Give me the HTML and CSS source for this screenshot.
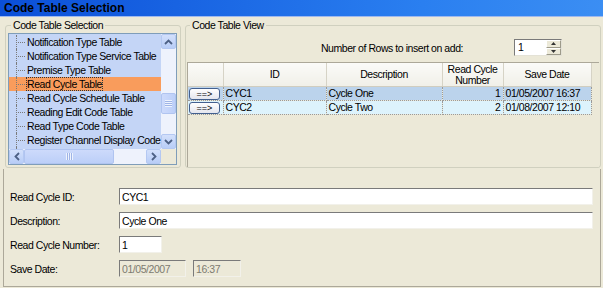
FILE: index.html
```html
<!DOCTYPE html>
<html lang="en">
<head>
  <meta charset="UTF-8" />
  <title>Code Table Selection</title>
  <link rel="stylesheet" href="styles.css">
</head>
<body>
  <div class="window">
    <div class="titlebar">Code Table Selection</div>

    <div class="top">
      <fieldset class="group group-select">
        <legend>Code Table Selection</legend>
        <div class="list">
          <div class="list-items">
            <div class="item"><span class="branch"></span><span class="label">Notification Type Table</span></div>
            <div class="item"><span class="branch"></span><span class="label">Notification Type Service Table</span></div>
            <div class="item"><span class="branch"></span><span class="label">Premise Type Table</span></div>
            <div class="item selected"><span class="branch"></span><span class="label">Read Cycle Table</span></div>
            <div class="item"><span class="branch"></span><span class="label">Read Cycle Schedule Table</span></div>
            <div class="item"><span class="branch"></span><span class="label">Reading Edit Code Table</span></div>
            <div class="item"><span class="branch"></span><span class="label">Read Type Code Table</span></div>
            <div class="item"><span class="branch"></span><span class="label">Register Channel Display Code Table</span></div>
            <div class="item"><span class="branch"></span><span class="label">Register Type Code Table</span></div>
          </div>
          <div class="vscroll">
            <div class="sb-btn"><svg width="9" height="6" viewBox="0 0 9 6"><path d="M1 5 L4.5 1.5 L8 5" fill="none" stroke="#4d6185" stroke-width="1.8"/></svg></div>
            <div class="sb-track"><div class="sb-thumb v"><span class="grip-v"></span></div></div>
            <div class="sb-btn"><svg width="9" height="6" viewBox="0 0 9 6"><path d="M1 1 L4.5 4.5 L8 1" fill="none" stroke="#4d6185" stroke-width="1.8"/></svg></div>
          </div>
          <div class="hscroll">
            <div class="sb-btn"><svg width="6" height="9" viewBox="0 0 6 9"><path d="M5 1 L1.5 4.5 L5 8" fill="none" stroke="#4d6185" stroke-width="1.8"/></svg></div>
            <div class="sb-track h"><div class="sb-thumb h"><span class="grip-h"></span></div></div>
            <div class="sb-btn"><svg width="6" height="9" viewBox="0 0 6 9"><path d="M1 1 L4.5 4.5 L1 8" fill="none" stroke="#4d6185" stroke-width="1.8"/></svg></div>
          </div>
          <div class="corner"></div>
        </div>
      </fieldset>

      <fieldset class="group group-view">
        <legend>Code Table View</legend>
        <div class="rows-add">
          <span>Number of Rows to insert on add:</span>
          <div class="spinner">
            <span class="spin-val">1</span>
            <div class="spin-btns">
              <span class="spin-btn"><svg width="5" height="3" viewBox="0 0 5 3"><path d="M0 3 L2.5 0 L5 3Z" fill="#333"/></svg></span>
              <span class="spin-btn"><svg width="5" height="3" viewBox="0 0 5 3"><path d="M0 0 L2.5 3 L5 0Z" fill="#333"/></svg></span>
            </div>
          </div>
        </div>
        <div class="grid-area">
          <table class="grid">
            <colgroup>
              <col class="c-btn"><col class="c-id"><col class="c-desc"><col class="c-num"><col class="c-date">
            </colgroup>
            <thead>
              <tr>
                <th></th>
                <th>ID</th>
                <th>Description</th>
                <th>Read Cycle<br>Number</th>
                <th>Save Date</th>
              </tr>
            </thead>
            <tbody>
              <tr class="row-current">
                <td class="btn-cell"><span class="row-btn">==&gt;</span></td>
                <td>CYC1</td>
                <td>Cycle One</td>
                <td class="num">1</td>
                <td>01/05/2007 16:37</td>
              </tr>
              <tr class="row-alt">
                <td class="btn-cell"><span class="row-btn">==&gt;</span></td>
                <td>CYC2</td>
                <td>Cycle Two</td>
                <td class="num">2</td>
                <td>01/08/2007 12:10</td>
              </tr>
            </tbody>
          </table>
        </div>
      </fieldset>
    </div>

    <div class="details">
      <div class="field">
        <label>Read Cycle ID:</label>
        <input class="box wide" type="text" value="CYC1">
      </div>
      <div class="field">
        <label>Description:</label>
        <input class="box wide" type="text" value="Cycle One">
      </div>
      <div class="field">
        <label>Read Cycle Number:</label>
        <input class="box short" type="text" value="1">
      </div>
      <div class="field">
        <label>Save Date:</label>
        <input class="box date" type="text" value="01/05/2007" disabled>
        <input class="box time" type="text" value="16:37" disabled>
      </div>
    </div>
  </div>
</body>
</html>
```

FILE: styles.css
```css
body {
  margin: 0;
  background: #ece9d8;
  font-family: "Liberation Sans", Arial, sans-serif;
  font-size: 10.5px;
  letter-spacing: -0.45px;
  color: #000;
}
.window {
  width: 603px;
  height: 288px;
  overflow: hidden;
}
.titlebar {
  height: 16px;
  line-height: 16px;
  padding-left: 4px;
  font-weight: bold;
  font-size: 12px;
  letter-spacing: 0;
  color: #000;
  background: linear-gradient(to right, #0b4fd8, #2a7ff0 70%, #3b8ef3);
  border-bottom: 1px solid #9fb9ee;
}
.top {
  display: flex;
  gap: 4px;
  padding: 1px 0 0 5px;
  height: 150px;
}
.group {
  box-sizing: border-box;
  margin: 0;
  min-width: 0;
  height: 150px;
  border: 1px solid #d0d0bf;
  border-radius: 3px;
}
.group legend {
  margin-left: 3px;
  padding: 0 2px;
  line-height: 14px;
}
.group-select {
  width: 176px;
  padding: 1px 2px 2px 2px;
}
.group-view {
  width: 416px;
  padding: 0 1px 0 1px;
}

/* tree list */
.list {
  box-sizing: border-box;
  width: 169px;
  height: 132px;
  border: 1px solid #7f9db9;
  background: #c4d5f6;
  display: grid;
  grid-template-columns: 1fr 15px;
  grid-template-rows: 1fr 15px;
}
.list-items {
  overflow: hidden;
  padding-top: 1px;
}
.item {
  display: flex;
  align-items: center;
  height: 14px;
  white-space: nowrap;
}
.item.selected {
  background: #f99c5c;
}
.branch {
  flex: none;
  width: 9px;
  height: 14px;
  margin-left: 7px;
  border-left: 1px dotted #7a7a7a;
  background: repeating-linear-gradient(to right, #7a7a7a 0 1px, transparent 1px 2px) no-repeat 1px 7px / 8px 1px;
}
.label {
  padding: 0;
  line-height: 12px;
  border: 1px dotted transparent;
}
.selected .label {
  border-color: #333;
}
.vscroll {
  display: flex;
  flex-direction: column;
  background: #eef2fc;
}
.hscroll {
  display: flex;
  background: #eef2fc;
}
.sb-btn {
  box-sizing: border-box;
  flex: none;
  width: 15px;
  height: 15px;
  display: flex;
  align-items: center;
  justify-content: center;
  background: linear-gradient(#d3e0fb, #b8cdf7);
  border: 1px solid #b4c8f2;
  border-radius: 2px;
}
.sb-track {
  flex: 1;
}
.sb-thumb {
  box-sizing: border-box;
  background: linear-gradient(to right, #cddafb, #bccff8);
  border: 1px solid #b0c4f0;
  border-radius: 2px;
  display: flex;
  align-items: center;
  justify-content: center;
}
.sb-thumb.v {
  margin-top: 44px;
  height: 21px;
}
.sb-thumb.h {
  width: 90px;
  height: 15px;
  background: linear-gradient(#cddafb, #bccff8);
}
.grip-v {
  width: 7px;
  height: 7px;
  background: repeating-linear-gradient(#eef3fd 0 1px, #9fb4e6 1px 2px);
}
.grip-h {
  width: 7px;
  height: 7px;
  background: repeating-linear-gradient(to right, #eef3fd 0 1px, #9fb4e6 1px 2px);
}
.corner {
  background: #ece9d8;
}

/* table view */
.rows-add {
  display: flex;
  align-items: center;
  justify-content: flex-end;
  gap: 51px;
  height: 17px;
  margin-top: 7px;
  padding-right: 37px;
}
.spinner {
  box-sizing: border-box;
  display: flex;
  width: 48px;
  height: 17px;
  background: #fff;
  border: 1px solid;
  border-color: #7a7a7a #e4e2d6 #e4e2d6 #7a7a7a;
}
.spin-val {
  flex: 1;
  padding-left: 3px;
  line-height: 15px;
}
.spin-btns {
  display: flex;
  flex-direction: column;
  width: 15px;
}
.spin-btn {
  box-sizing: border-box;
  flex: 1;
  display: flex;
  align-items: center;
  justify-content: center;
  background: #ece9d8;
  border: 1px solid;
  border-color: #fff #9d9a8a #9d9a8a #fff;
}
.grid-area {
  box-sizing: border-box;
  height: 105px;
  margin-top: 6px;
  border-top: 1px solid #aca899;
  border-left: 1px solid #aca899;
  background: #ece9d8;
}
.grid {
  border-collapse: collapse;
  table-layout: fixed;
  width: 403px;
}
.c-btn { width: 35px; }
.c-id { width: 103px; }
.c-desc { width: 116px; }
.c-num { width: 61px; }
.c-date { width: 88px; }
.grid th {
  height: 23px;
  padding: 0;
  font-weight: normal;
  line-height: 11px;
  text-align: center;
  background: linear-gradient(#fbfbf8, #f0efe8);
  border-right: 1px solid #d6d3c6;
  border-bottom: 1px solid #d0cdbf;
}
.grid td {
  height: 13px;
  padding: 0 0 0 2px;
  line-height: 13px;
  white-space: nowrap;
  overflow: hidden;
  border-right: 1px dotted #9a9a9a;
  border-bottom: 1px dotted #9a9a9a;
}
.grid td.num {
  text-align: right;
  padding: 0 2px 0 0;
}
.grid td.btn-cell {
  padding: 0 0 0 1px;
}
.row-current td {
  background: #bbd3ec;
}
.row-alt td {
  background: #ddf3fc;
}
.row-btn {
  box-sizing: border-box;
  display: block;
  width: 31px;
  height: 12px;
  line-height: 10px;
  font-size: 9px;
  letter-spacing: 0;
  text-align: center;
  background: linear-gradient(#ffffff, #e4e6ee);
  border: 1px solid #43608f;
  border-radius: 3px;
}

/* detail form */
.details {
  box-sizing: border-box;
  height: 118px;
  margin: 1px 2px 0 3px;
  padding: 19px 0 0 6px;
  border: 1px solid #aca899;
  border-top: none;
}
.field {
  display: flex;
  align-items: center;
  gap: 7px;
  height: 17px;
  margin-bottom: 7px;
}
.field label {
  width: 102px;
  white-space: nowrap;
}
.box {
  box-sizing: border-box;
  height: 17px;
  margin: 0;
  padding: 0 2px;
  font: inherit;
  letter-spacing: inherit;
  color: #000;
  background: #fff;
  border: 1px solid;
  border-color: #7a7a7a #f2f1ea #f2f1ea #7a7a7a;
  outline: none;
}
.box:disabled {
  background: #ece9d8;
  color: #7d7b70;
}
.wide { width: 474px; }
.short { width: 43px; }
.date { width: 67px; }
.time { width: 48px; }
```
